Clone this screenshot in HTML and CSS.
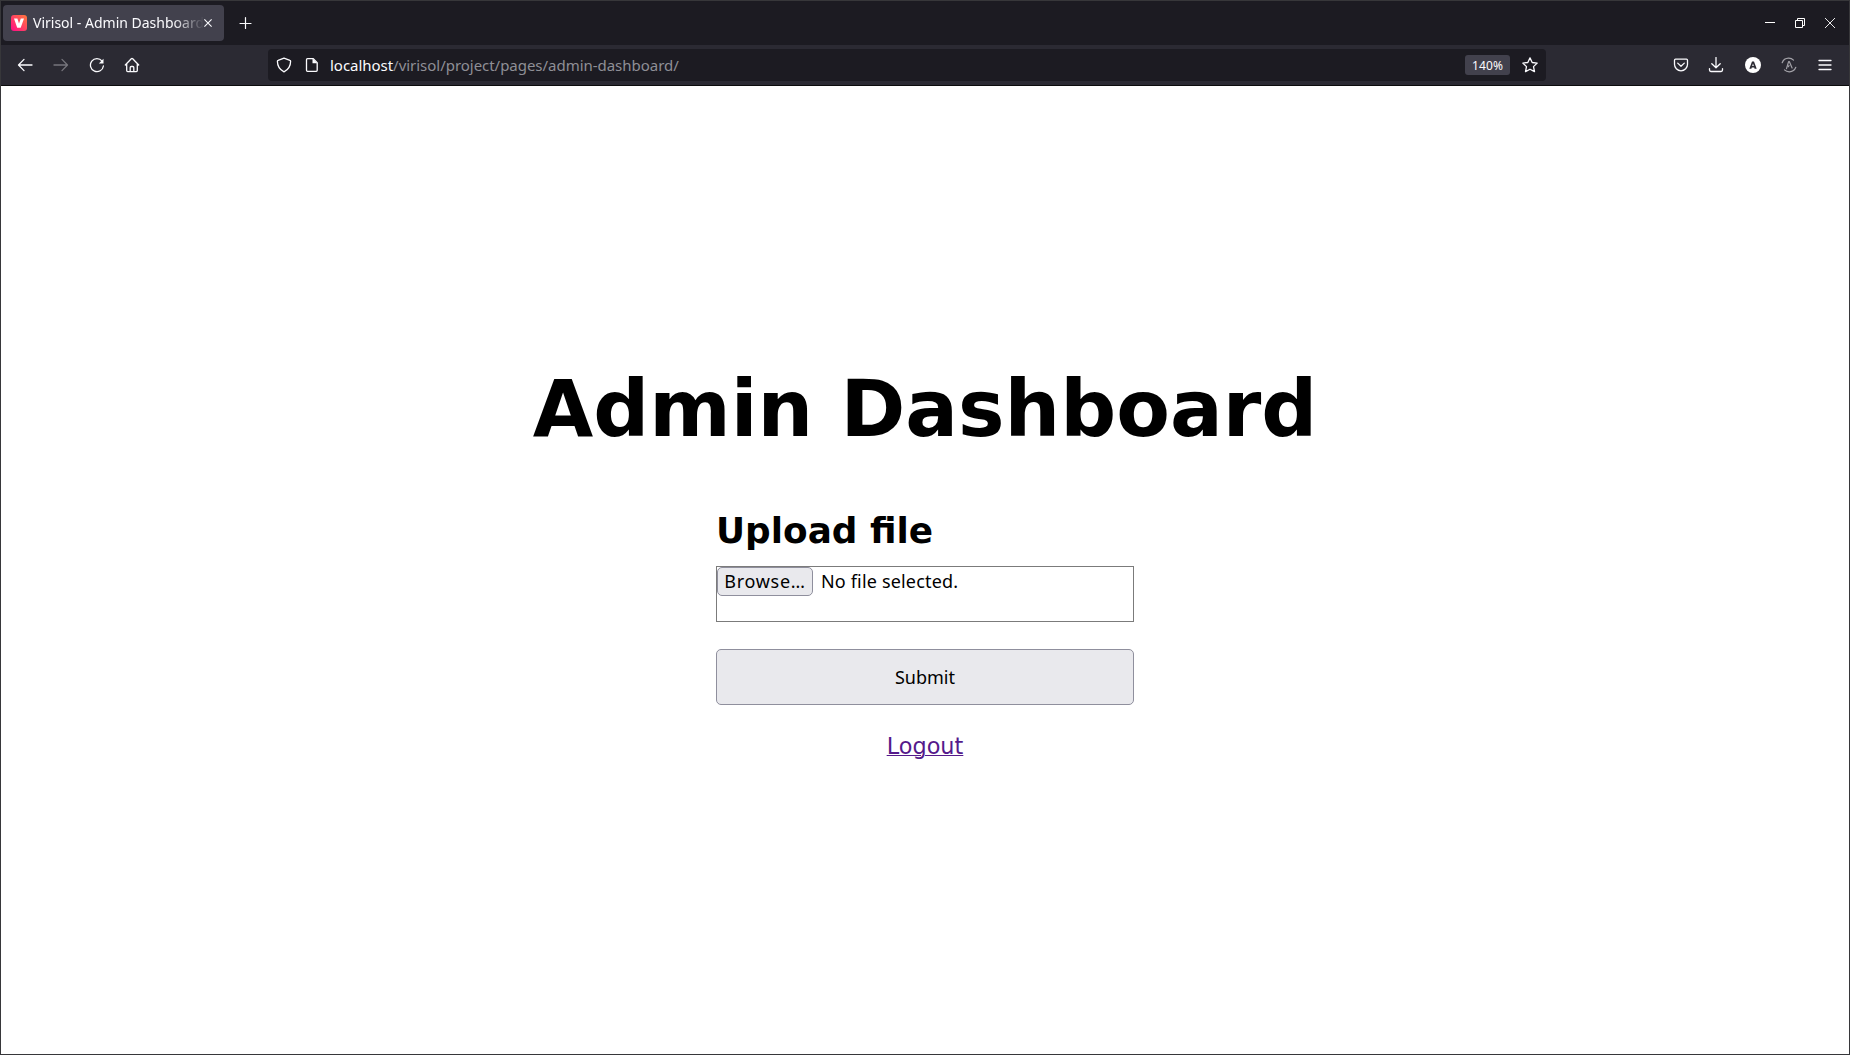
FILE: index.html
```html
<!DOCTYPE html>
<html lang="en">
<head>
<meta charset="utf-8">
<title>Virisol - Admin Dashboard</title>
<link rel="stylesheet" href="styles.css">
</head>
<body>
<div class="window">
  <header class="titlebar">
    <div class="tab">
      <svg class="favicon" width="16" height="16" viewBox="0 0 16 16"><defs><linearGradient id="fav" x1="0" y1="1" x2="1" y2="0"><stop offset="0" stop-color="#ff0a87"/><stop offset="1" stop-color="#ff7a3c"/></linearGradient></defs><rect width="16" height="16" rx="3" fill="url(#fav)"/><path d="M3 3.5h3.4L8 8.6l1.8-5.1H13L9.7 12.7H6.2z" fill="#fff"/></svg>
      <span class="tab-title">Virisol - Admin Dashboard</span>
      <svg class="tab-close" width="8" height="8" viewBox="0 0 8 8"><path d="M.4.4l7.2 7.2M7.6.4L.4 7.6" stroke="#fbfbfe" stroke-width="1.1"/></svg>
    </div>
    <svg class="new-tab" width="12" height="12" viewBox="0 0 12 12"><path d="M5.500 .5v11M0 6.500h11" stroke="#fbfbfe" stroke-width="1.2" stroke-linecap="round"/></svg>
    <div class="window-controls">
      <svg width="10" height="10" viewBox="0 0 10 10"><path d="M0 4.5h10" stroke="#fff"/></svg>
      <svg width="10" height="10" viewBox="0 0 10 10" fill="none" stroke="#fff"><path d="M.5 2.5h7v7h-7zM2.5 2.500V.5h7v7h-2"/></svg>
      <svg width="10" height="10" viewBox="0 0 10 10"><path d="M0 0l10 10M10 0L0 10" stroke="#fff" stroke-width=".9"/></svg>
    </div>
  </header>
  <nav class="toolbar">
    <div class="nav-buttons">
      <svg class="icon" viewBox="0 0 16 16"><path d="M7 2.400L1.500 8 7 13.600M1.700 8h13.300"/></svg>
      <svg class="icon disabled" viewBox="0 0 16 16"><path d="M9 2.400L14.500 8 9 13.600M14.300 8H1"/></svg>
      <svg class="icon" viewBox="0 0 16 16"><path d="M13.100 4.200A6.500 6.500 0 1 0 14.400 9"/><path d="M14.500 1.800V6.500H9.800z" fill="#fbfbfe" stroke="none"/></svg>
      <svg class="icon home" viewBox="0 0 16 16"><path d="M1.300 8L7.300 1.700q.7-.6 1.400 0L14.700 8M2.700 7v6.600q0 1 1 1h8.600q1 0 1-1V7M6.200 14.500v-4q0-1 1-1h1.600q1 0 1 1v4"/></svg>
    </div>
    <div class="urlbar">
      <svg class="icon" viewBox="0 0 16 16"><path d="M8 1.100l5.900 2.200q.7.200.7 1Q14.600 11.500 8 14.900 1.400 11.500 1.400 4.300q0-.8.7-1z"/></svg>
      <svg class="icon page-icon" viewBox="0 0 16 16"><path d="M3.500 1.700h5.800l3.900 3.900v7.700q0 1-1 1H3.500q-1 0-1-1V2.700q0-1 1-1z"/><path d="M8.500 1.500v4.800h4.900z" fill="#fbfbfe" stroke="none"/></svg>
      <span class="url"><span class="host">localhost</span>/virisol/project/pages/admin-dashboard/</span>
      <span class="zoom-level">140%</span>
      <svg class="icon" viewBox="0 0 16 16"><path d="M8 .9l2.200 4.600 5 .6-3.700 3.500 1 5L8 12.200l-4.500 2.400 1-5L.8 6.100l5-.6z"/></svg>
    </div>
    <div class="tools">
      <svg class="icon" viewBox="0 0 16 16"><path d="M2.500 2.200h11q1 0 1 1v4.100q0 2.700-1.800 4.500-2 2-4.700 2t-4.700-2Q1.500 10 1.500 7.300V3.200q0-1 1-1zM4.700 6.100L8 9.200l3.300-3.100"/></svg>
      <svg class="icon download" viewBox="0 0 16 16"><path d="M8 .5v10.100M3.800 6.700L8 10.800l4.200-4.100M1.500 11.600v1.500q0 1.400 1.400 1.400h10.200q1.400 0 1.400-1.400v-1.500"/></svg>
      <svg class="icon" viewBox="0 0 16 16"><circle cx="8" cy="8" r="8" fill="#fff" stroke="none"/><path d="M7 4.500h2l2.700 7.300H9.600l-.4-1.300H6.800l-.4 1.300H4.300zM8 6.600l-.8 2.500h1.600z" fill="#2b2a33" fill-rule="evenodd" stroke="none"/></svg>
      <svg class="icon muted" viewBox="0 0 16 16"><path d="M1.200 5.700Q2.800 1.400 7.500 1.200q3-.1 5 1.900M14.800 10.300q-1.600 4.300-6.300 4.500-3 .1-5-1.900M5.500 11.700L7.600 4.700h.8l2.700 6.200M8 8.500l-.6 1.200"/></svg>
      <svg class="icon" viewBox="0 0 16 16"><path d="M2 3.500h12M2 8h12M2 12.500h12"/></svg>
    </div>
  </nav>
  <main class="page">
    <h1>Admin Dashboard</h1>
    <form class="upload">
      <h2>Upload file</h2>
      <div class="file-input">
        <button type="button" class="browse"><span>Browse…</span></button>
        <span class="file-status">No file selected.</span>
      </div>
      <button type="button" class="submit"><span>Submit</span></button>
    </form>
    <a class="logout" href="#">Logout</a>
  </main>
</div>
</body>
</html>
```
FILE: styles.css
```css
* { box-sizing: border-box; }
body { margin: 0; }
.window {
  width: 1850px;
  height: 1055px;
  border: 1px solid #37373a;
  background: #fff;
  display: flex;
  flex-direction: column;
  overflow: hidden;
  font-family: "Noto Sans", "Open Sans", sans-serif;
}
svg { display: block; flex: none; }
.titlebar {
  height: 44px;
  flex: none;
  background: #1c1b22;
  display: flex;
  align-items: center;
  padding: 0 14px 0 2px;
}
.tab {
  width: 221px;
  height: 36px;
  border-radius: 4px;
  background: #42414d;
  display: flex;
  align-items: center;
  padding: 0 12px 0 8px;
}
.tab-title {
  width: 171px;
  margin-left: 6px;
  overflow: hidden;
  white-space: nowrap;
  color: #fbfbfe;
  font-size: 14px;
  line-height: 20px;
  -webkit-mask-image: linear-gradient(to right, #000 140px, transparent 171px);
  mask-image: linear-gradient(to right, #000 140px, transparent 171px);
}
.tab-close { margin-left: auto; }
.new-tab { margin-left: 16px; overflow: visible; }
.window-controls {
  margin-left: auto;
  display: flex;
  gap: 20px;
}
.toolbar {
  height: 41px;
  flex: none;
  background: #2b2a33;
  border-bottom: 1px solid #0c0c0d;
  display: flex;
  align-items: center;
  padding: 0 16px;
}
.icon {
  width: 16px;
  height: 16px;
  fill: none;
  stroke: #fbfbfe;
  stroke-width: 1.3;
  stroke-linecap: round;
  stroke-linejoin: round;
}
.disabled { stroke: #77767d; }
.muted { stroke: #a3a2a8; stroke-width: 1.2; }
.home, .download { margin: 0 1px 0 -1px; }
.nav-buttons { width: 251px; display: flex; gap: 20px; }
.urlbar {
  width: 1278px;
  height: 32px;
  border-radius: 4px;
  background: #1c1b22;
  display: flex;
  align-items: center;
  padding: 0 8px;
}
.page-icon { margin-left: 12px; }
.url {
  margin-left: 10px;
  flex: 1;
  color: #8f8f96;
  font-size: 15px;
  letter-spacing: -.03px;
  white-space: nowrap;
}
.host { color: #fbfbfe; }
.zoom-level {
  width: 45px;
  height: 20px;
  margin-right: 12px;
  border-radius: 3px;
  background: #42414d;
  color: #fbfbfe;
  font-size: 12px;
  letter-spacing: .15px;
  line-height: 21px;
  text-align: center;
}
.tools { margin-left: auto; display: flex; gap: 20px; }
.page {
  flex: 1;
  display: flex;
  flex-direction: column;
  align-items: center;
  font-family: "DejaVu Sans", sans-serif;
  color: #000;
}
h1 {
  margin: 277px 0 0;
  font-size: 78.200px;
  line-height: 92px;
  white-space: nowrap;
}
.upload { width: 418px; display: flex; flex-direction: column; }
h2 {
  margin: 55px 0 0;
  font-size: 35.840px;
  line-height: 42px;
}
.file-input {
  height: 56px;
  margin-top: 14px;
  border: 1px solid #7b7b7b;
  display: flex;
  align-items: flex-start;
  font: 18px/28px "Noto Sans", sans-serif;
}
.browse, .submit {
  padding: 0;
  border: 1px solid #8f8f9d;
  border-radius: 5px;
  background: #e9e9ed;
  color: #000;
  font: 18px/27px "Noto Sans", sans-serif;
}
.browse { width: 96px; height: 29px; letter-spacing: .7px; }
.file-status { margin-left: 8px; letter-spacing: .17px; }
.submit { height: 56px; margin-top: 27px; }
.logout {
  margin-top: 27px;
  font-size: 22.400px;
  line-height: 28px;
  color: #551a8b;
  text-decoration-thickness: 1px;
}
```
